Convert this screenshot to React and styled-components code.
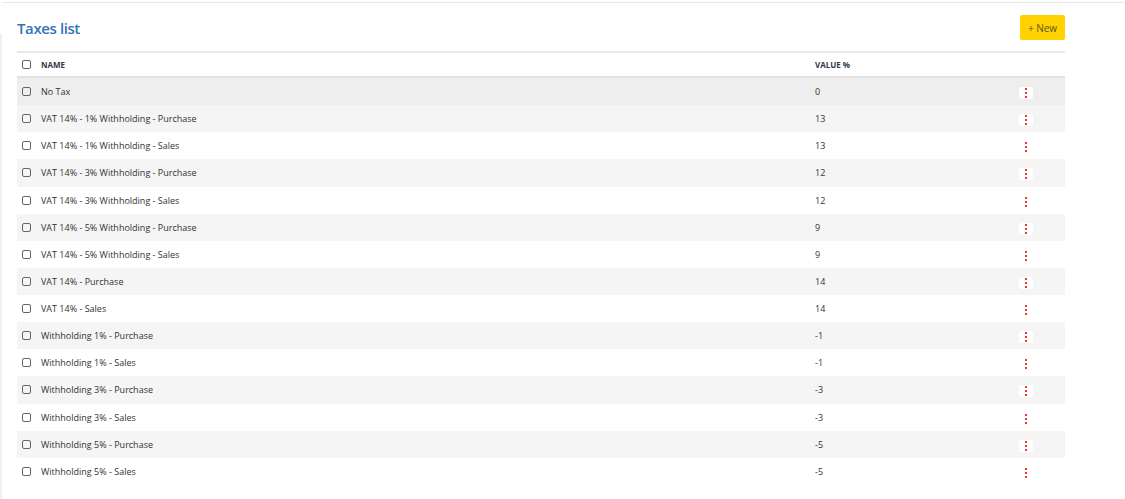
import React, { useState } from 'react';
import styled, { createGlobalStyle } from 'styled-components';

const GlobalStyle = createGlobalStyle`
  html, body {
    margin: 0;
    padding: 0;
    background: #fff;
  }
  body {
    font-family: "Open Sans", "Noto Sans", Arial, sans-serif;
    color: #333;
  }
`;

const Page = styled.div`
  display: flex;
  min-height: 499px;
  padding-top: 2px;
  box-sizing: border-box;
`;

const Edge = styled.div`
  width: 2px;
  margin-top: 32px;
  background: #f0f0f0;
`;

const Main = styled.main`
  flex: 1;
  border-top: 1px solid #e7e7ef;
  padding: 12px 60px 0 15px;
`;

const Header = styled.div`
  display: flex;
  align-items: center;
  justify-content: space-between;
  height: 25px;
  margin-bottom: 11px;
`;

const Title = styled.h2`
  margin: 0;
  font-size: 15px;
  font-weight: 600;
  color: #3174b8;
  letter-spacing: -0.4px;
`;

const NewButton = styled.button`
  height: 25px;
  width: 45px;
  padding: 0;
  border: none;
  border-radius: 2px;
  background: #ffd200;
  color: #5a5628;
  font-family: inherit;
  font-size: 10px;
  cursor: pointer;
`;

const Table = styled.div`
  border-top: 2px solid #e9e9e9;
`;

const Row = styled.div`
  display: grid;
  grid-template-columns: 19px 774px 1fr 46px;
  align-items: center;
  height: ${(p) => (p.$head ? '23px' : '27.14px')};
  padding-left: 5px;
  background: ${(p) => (p.$hover ? '#eeeeee' : p.$striped ? '#f5f5f5' : '#fff')};
  border-bottom: ${(p) => (p.$head ? '2px solid #e2e2e2' : 'none')};
  font-weight: ${(p) => (p.$head ? 700 : 400)};
  color: ${(p) => (p.$head ? '#2f3a4a' : '#333')};
  font-size: ${(p) => (p.$head ? '8px' : '9px')};
`;

const Check = styled.span`
  display: block;
  width: 7px;
  height: 7px;
  border: 1.3px solid #5f6672;
  border-radius: 2px;
`;

const MenuButton = styled.span`
  display: flex;
  flex-direction: column;
  align-items: center;
  justify-content: center;
  gap: 2px;
  width: 14px;
  height: 12px;
  margin-top: 3px;
  border-radius: 3px;
  background: ${(p) => (p.$boxed ? '#fff' : 'transparent')};
`;

const Dot = styled.i`
  display: block;
  width: 2px;
  height: 2px;
  background: #e53935;
`;

const taxes = [
  ['No Tax', 0],
  ['VAT 14% - 1% Withholding - Purchase', 13],
  ['VAT 14% - 1% Withholding - Sales', 13],
  ['VAT 14% - 3% Withholding - Purchase', 12],
  ['VAT 14% - 3% Withholding - Sales', 12],
  ['VAT 14% - 5% Withholding - Purchase', 9],
  ['VAT 14% - 5% Withholding - Sales', 9],
  ['VAT 14% - Purchase', 14],
  ['VAT 14% - Sales', 14],
  ['Withholding 1% - Purchase', -1],
  ['Withholding 1% - Sales', -1],
  ['Withholding 3% - Purchase', -3],
  ['Withholding 3% - Sales', -3],
  ['Withholding 5% - Purchase', -5],
  ['Withholding 5% - Sales', -5],
];

const App = () => {
  const [hovered] = useState(0);

  return (
    <>
      <GlobalStyle />
      <Page>
        <Edge />
        <Main>
          <Header>
            <Title>Taxes list</Title>
            <NewButton>+ New</NewButton>
          </Header>
          <Table>
            <Row $head>
              <Check />
              <span>NAME</span>
              <span>VALUE %</span>
              <span />
            </Row>
            {taxes.map(([name, value], i) => {
              const grey = i === hovered || i % 2 === 1;
              return (
                <Row key={name} $hover={i === hovered} $striped={i % 2 === 1}>
                  <Check />
                  <span>{name}</span>
                  <span>{value}</span>
                  <MenuButton $boxed={grey}>
                    <Dot />
                    <Dot />
                    <Dot />
                  </MenuButton>
                </Row>
              );
            })}
          </Table>
        </Main>
      </Page>
    </>
  );
};

export default App;
